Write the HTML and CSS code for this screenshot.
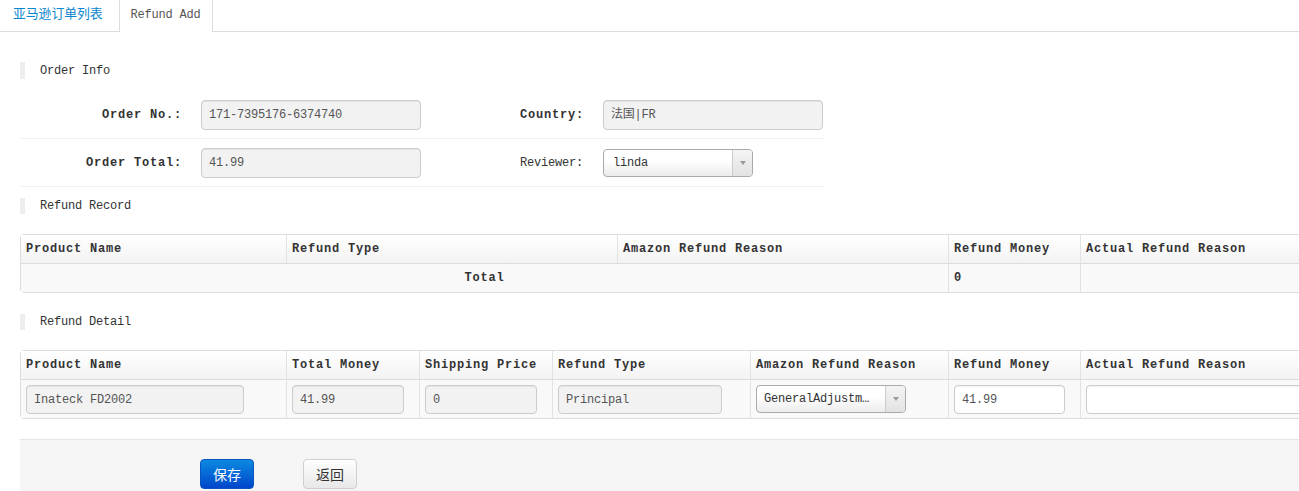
FILE: index.html
```html
<!DOCTYPE html>
<html lang="zh">
<head>
<meta charset="utf-8">
<title>Refund Add</title>
<link rel="stylesheet" href="styles.css">
</head>
<body>
<div class="page">
  <ul class="tabs">
    <li class="tab tab-link">亚马逊订单列表</li>
    <li class="tab tab-active">Refund Add</li>
  </ul>

  <div class="section-head first">Order Info</div>
  <div class="form">
    <div class="form-row">
      <label class="lbl bold">Order No.:</label>
      <div class="input ro">171-7395176-6374740</div>
      <label class="lbl bold">Country:</label>
      <div class="input ro">法国|FR</div>
    </div>
    <div class="form-row">
      <label class="lbl bold">Order Total:</label>
      <div class="input ro">41.99</div>
      <label class="lbl">Reviewer:</label>
      <div class="select sel-reviewer"><span class="sel-text">linda</span><span class="sel-arrow"></span></div>
    </div>
  </div>

  <div class="section-head after-form">Refund Record</div>
  <div class="table-wrap">
    <table class="grid">
      <colgroup>
        <col class="c265"><col class="c331"><col class="c331"><col class="c132"><col class="c240">
      </colgroup>
      <thead>
        <tr><th>Product Name</th><th>Refund Type</th><th>Amazon Refund Reason</th><th>Refund Money</th><th>Actual Refund Reason</th></tr>
      </thead>
      <tbody>
        <tr class="total-row"><td colspan="3" class="center bold">Total</td><td class="bold">0</td><td></td></tr>
      </tbody>
    </table>
  </div>

  <div class="section-head">Refund Detail</div>
  <div class="table-wrap">
    <table class="grid">
      <colgroup>
        <col class="c265"><col class="c133"><col class="c133"><col class="c198"><col class="c198"><col class="c132"><col class="c240">
      </colgroup>
      <thead>
        <tr><th>Product Name</th><th>Total Money</th><th>Shipping Price</th><th>Refund Type</th><th>Amazon Refund Reason</th><th>Refund Money</th><th>Actual Refund Reason</th></tr>
      </thead>
      <tbody>
        <tr class="detail-row">
          <td><div class="input ro w218">Inateck FD2002</div></td>
          <td><div class="input ro w112">41.99</div></td>
          <td><div class="input ro w112">0</div></td>
          <td><div class="input ro w164">Principal</div></td>
          <td><div class="select sel-reason"><span class="sel-text">GeneralAdjustm…</span><span class="sel-arrow"></span></div></td>
          <td><div class="input edit w111">41.99</div></td>
          <td><div class="input edit w230"></div></td>
        </tr>
      </tbody>
    </table>
  </div>

  <div class="actions">
    <button class="btn btn-primary">保存</button>
    <button class="btn btn-default">返回</button>
  </div>
</div>
</body>
</html>
```

FILE: styles.css
```css
html, body {
  margin: 0;
  padding: 0;
  background: #fff;
}
body {
  overflow: hidden;
  font-family: "Liberation Mono", "Noto Sans CJK SC", monospace;
  font-size: 12px;
  letter-spacing: -0.2px;
  color: #333;
}
.page {
  width: 1299px;
  overflow: hidden;
}

/* tabs */
.tabs {
  list-style: none;
  margin: 0;
  padding: 0;
  display: flex;
  height: 31px;
  border-bottom: 1px solid #ddd;
}
.tab {
  height: 31px;
  box-sizing: border-box;
  padding: 5px 12px 0;
  line-height: 18px;
}
.tab-link {
  margin-left: 1px;
  color: #0a86cf;
  font-family: "Noto Sans CJK SC", sans-serif;
  font-size: 12.8px;
  letter-spacing: 0;
  padding-top: 4px;
}
.tab-active {
  margin-left: 4px;
  height: 32px;
  background: #fff;
  border-left: 1px solid #ddd;
  border-right: 1px solid #ddd;
  color: #555;
  padding-left: 11px;
  padding-right: 11px;
  padding-top: 6px;
}

/* section heads */
.section-head {
  margin: 21px 0 0 20px;
  height: 16px;
  line-height: 16px;
  border-left: 5px solid #eee;
  padding-left: 15px;
  color: #333;
}
.section-head.first {
  margin-top: 30px;
  height: 17px;
  line-height: 19px;
}
.section-head.after-form {
  margin-top: 11px;
}

/* form */
.form {
  width: 803px;
  margin: 12px 0 0 20px;
}
.form-row {
  display: grid;
  grid-template-columns: 181px 220px 182px auto;
  align-items: center;
  padding: 9px 0 8px;
  border-bottom: 1px dotted #e3e3e3;
}
.lbl {
  text-align: right;
  padding-right: 20px;
  white-space: nowrap;
}
.bold {
  font-weight: bold;
  letter-spacing: 0.8px;
}
.lbl.bold {
  padding-right: 19px;
}

.input {
  box-sizing: border-box;
  height: 30px;
  line-height: 29px;
  border: 1px solid #ccc;
  border-radius: 4px;
  padding: 0 7px;
  color: #555;
  background: #fff;
  box-shadow: inset 0 1px 1px rgba(0,0,0,0.06);
  white-space: nowrap;
  overflow: hidden;
}
.form .input {
  width: 220px;
}
.input.ro {
  background: #f2f2f2;
}
.select {
  box-sizing: border-box;
  display: flex;
  height: 28px;
  border: 1px solid #aaa;
  border-radius: 4px;
  background: linear-gradient(#ffffff 40%, #ececec);
  overflow: hidden;
}
.sel-text {
  flex: 1;
  line-height: 27px;
  padding-left: 9px;
  color: #333;
  white-space: nowrap;
  overflow: hidden;
  text-overflow: ellipsis;
}
.sel-arrow {
  width: 19px;
  border-left: 1px solid #ccc;
  background: linear-gradient(#f4f4f4, #e2e2e2);
  display: flex;
  align-items: center;
  justify-content: center;
}
.sel-arrow::after {
  content: "";
  width: 0;
  height: 0;
  border-left: 3px solid transparent;
  border-right: 3px solid transparent;
  border-top: 4px solid #999;
}
.sel-reviewer {
  width: 150px;
}
.sel-reason {
  width: 150px;
}
.sel-reason .sel-text {
  padding-left: 7px;
  padding-right: 4px;
  text-overflow: clip;
}

/* tables */
.table-wrap {
  margin: 20px 0 0 20px;
  width: 1301px;
}
.grid {
  table-layout: fixed;
  width: 1301px;
  border-collapse: separate;
  border-spacing: 0;
  border: 1px solid #dcdcdc;
  border-radius: 4px 0 0 4px;
}
.c265 { width: 265px; }
.c331 { width: 331px; }
.c132 { width: 132px; }
.c133 { width: 133px; }
.c198 { width: 198px; }
.c240 { width: 240px; }
.grid th {
  height: 28px;
  padding: 0 5px;
  text-align: left;
  font-weight: bold;
  letter-spacing: 0.8px;
  color: #333;
  background: linear-gradient(#ffffff, #f3f3f3);
  border-left: 1px solid #e2e2e2;
  white-space: nowrap;
}
.grid th:first-child,
.grid td:first-child {
  border-left: none;
}
.grid td {
  padding: 0 5px;
  height: 28px;
  border-top: 1px solid #dcdcdc;
  border-left: 1px solid #e2e2e2;
  background: #f9f9f9;
}
.grid td.center {
  text-align: center;
}
.detail-row td {
  height: 38px;
  padding: 0 5px;
}
.detail-row .input {
  height: 29px;
  line-height: 28px;
}
.w218 { width: 218px; }
.w112 { width: 112px; }
.w164 { width: 164px; }
.w111 { width: 111px; }
.w230 { width: 230px; }

/* actions */
.actions {
  margin: 20px 0 0 20px;
  width: 1300px;
  height: 60px;
  box-sizing: border-box;
  padding: 19px 0 0 180px;
  background: #f5f5f5;
  border-top: 1px solid #e5e5e5;
  display: flex;
  align-items: flex-start;
  gap: 49px;
}
.btn {
  box-sizing: border-box;
  width: 54px;
  height: 30px;
  border-radius: 4px;
  font-family: "Noto Sans CJK SC", sans-serif;
  font-size: 14px;
  padding: 0;
  cursor: pointer;
}
.btn-primary {
  color: #fff;
  background: linear-gradient(#0a8ae0, #0046cc);
  border: 1px solid #0a55c0;
}
.btn-default {
  color: #333;
  background: linear-gradient(#ffffff, #e8e8e8);
  border: 1px solid #cfcfcf;
}
```
